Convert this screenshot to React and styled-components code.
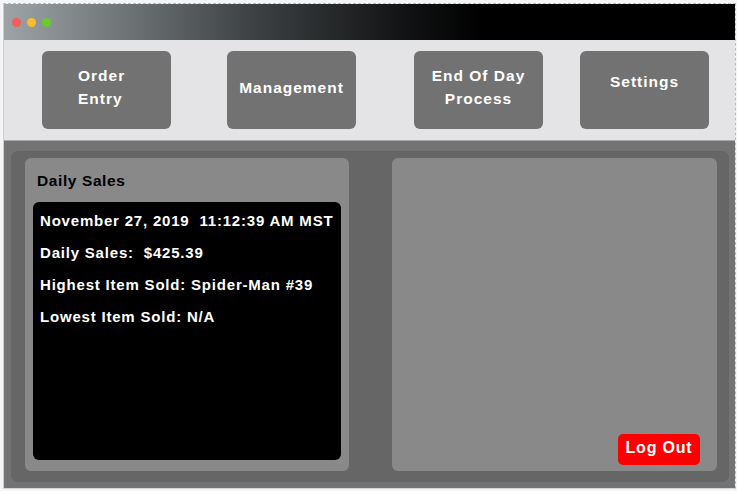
import React from "react";
import styled, { createGlobalStyle } from "styled-components";

const Global = createGlobalStyle`
  html, body { margin: 0; padding: 0; background: #f4f5f6; }
  body { font-family: "Liberation Sans", Arial, sans-serif; }
`;

const Window = styled.div`
  margin: 3px 0 0 3px;
  width: 731px;
  height: 484px;
  border-top: 1px dashed #9cc3e6;
  border-left: 1px solid #c9ced3;
  border-right: 1px dashed #9cc3e6;
  border-bottom: 1px solid #d4d6d8;
  display: flex;
  flex-direction: column;
  overflow: hidden;
`;

const TitleBar = styled.div`
  height: 36px;
  flex: none;
  display: flex;
  align-items: center;
  gap: 6px;
  padding-left: 8px;
  background: linear-gradient(to right, #9da3a6 0px, #3d4143 250px, #121314 400px, #000 480px);
`;

const Light = styled.span`
  width: 9px;
  height: 9px;
  border-radius: 50%;
  background: ${(p) => p.$color};
`;

const Nav = styled.nav`
  height: 101px;
  flex: none;
  display: flex;
  align-items: flex-start;
  padding-top: 11px;
  box-sizing: border-box;
  background: #e4e4e6;
  border-bottom: 1px solid #a9a9a9;
`;

const NavButton = styled.button`
  flex: none;
  width: 129px;
  height: 78px;
  margin-left: ${(p) => p.$ml}px;
  box-sizing: border-box;
  padding: ${(p) => p.$top}px 0 0 ${(p) => p.$left || 0}px;
  border: none;
  border-radius: 6px;
  background: #727272;
  color: #fff;
  display: flex;
  flex-direction: column;
  justify-content: flex-start;
  align-items: ${(p) => (p.$align === "left" ? "flex-start" : "center")};
`;

const NavLabel = styled.span`
  font-family: "Liberation Sans", Arial, sans-serif;
  font-weight: 700;
  font-size: 15.5px;
  letter-spacing: 1px;
  line-height: 23px;
  white-space: nowrap;
`;

const Main = styled.main`
  flex: 1;
  background: #737373;
  padding: 10px 6px 6px 7px;
  display: flex;
`;

const Panel = styled.div`
  flex: 1;
  background: #666666;
  border-radius: 7px;
  padding: 7px 12px 11px 14px;
  display: grid;
  grid-template-columns: 324px 325px;
  column-gap: 43px;
`;

const Card = styled.section`
  background: #898989;
  border-radius: 6px;
  display: flex;
  flex-direction: column;
`;

const SalesCard = styled(Card)`
  padding: 14px 8px 11px 8px;
`;

const CardTitle = styled.h2`
  margin: 0 0 12px 4px;
  font-size: 15.5px;
  line-height: 18px;
  font-weight: 700;
  letter-spacing: 0.6px;
  color: #000;
`;

const Screen = styled.div`
  flex: 1;
  background: #000;
  border-radius: 6px;
  padding: 10px 0 0 7px;
  display: flex;
  flex-direction: column;
  gap: 14px;
`;

const Line = styled.div`
  color: #fff;
  font-weight: 700;
  font-size: 15px;
  line-height: 18px;
  letter-spacing: 0.8px;
  white-space: pre;
`;

const ActionCard = styled(Card)`
  justify-content: flex-end;
  align-items: flex-end;
  padding: 0 17px 6px 0;
`;

const LogOut = styled.button`
  width: 82px;
  height: 31px;
  border: none;
  border-radius: 5px;
  background: #ff0000;
  color: #fff;
  font-family: "Liberation Sans", Arial, sans-serif;
  font-weight: 700;
  font-size: 16px;
  letter-spacing: 0.8px;
  padding: 0 0 3px;
`;

const navItems = [
  { lines: ["Order", "Entry"], ml: 38, top: 13, left: 36, align: "left" },
  { lines: ["Management"], ml: 56, top: 25, align: "center" },
  { lines: ["End Of Day", "Process"], ml: 58, top: 13, align: "center" },
  { lines: ["Settings"], ml: 37, top: 19, align: "center" },
];

export default function App() {
  return (
    <>
      <Global />
      <Window>
        <TitleBar>
          <Light $color="#f25e58" />
          <Light $color="#f9bd2c" />
          <Light $color="#67cb2a" />
        </TitleBar>
        <Nav>
          {navItems.map((item) => (
            <NavButton
              key={item.lines.join(" ")}
              $ml={item.ml}
              $top={item.top}
              $left={item.left}
              $align={item.align}
            >
              {item.lines.map((l) => (
                <NavLabel key={l}>{l}</NavLabel>
              ))}
            </NavButton>
          ))}
        </Nav>
        <Main>
          <Panel>
            <SalesCard>
              <CardTitle>Daily Sales</CardTitle>
              <Screen>
                <Line>November 27, 2019  11:12:39 AM MST</Line>
                <Line>Daily Sales:  $425.39</Line>
                <Line>Highest Item Sold: Spider-Man #39</Line>
                <Line>Lowest Item Sold: N/A</Line>
              </Screen>
            </SalesCard>
            <ActionCard>
              <LogOut>Log Out</LogOut>
            </ActionCard>
          </Panel>
        </Main>
      </Window>
    </>
  );
}
